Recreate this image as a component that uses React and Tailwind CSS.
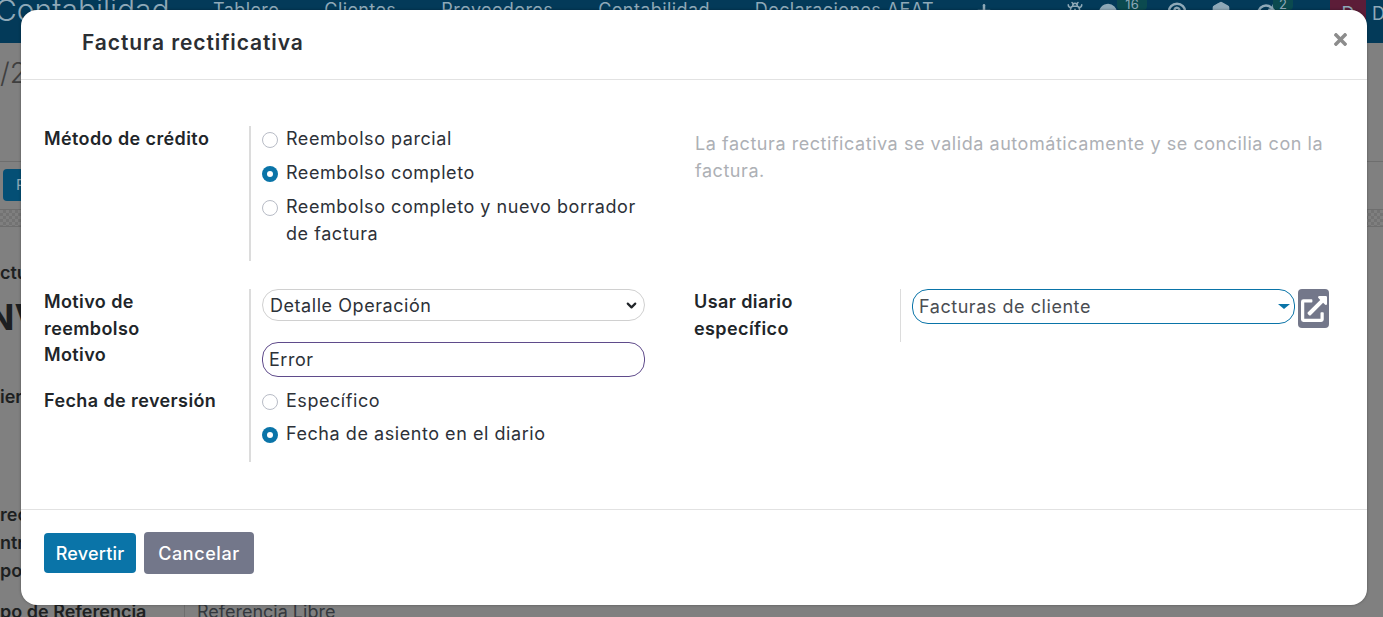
import { ChevronDown, Plus, Bug, MessageCircle, CircleHelp, Package, RefreshCw } from 'lucide-react'
import { FaExternalLinkAlt, FaTimes } from 'react-icons/fa'

const font = "[font-family:Inter,'Liberation_Sans',sans-serif]"

function Radio({ checked, children }) {
  return (
    <div className="flex items-start gap-2">
      {checked ? (
        <span className="mt-[6px] flex h-4 w-4 shrink-0 items-center justify-center rounded-full bg-[#0a74a8]">
          <span className="h-1.5 w-1.5 rounded-full bg-white" />
        </span>
      ) : (
        <span className="mt-[6px] h-4 w-4 shrink-0 rounded-full border border-[#b8bcc6] bg-white" />
      )}
      <span className="-mt-px leading-[27px] text-[#2d3138]">{children}</span>
    </div>
  )
}

function NavBehind() {
  return (
    <div className="flex h-[43px] shrink-0 items-start overflow-hidden bg-[#033a59] text-[#8fa9b8]">
      <span className="-ml-[5px] mt-[-12px] w-[218px] shrink-0 text-[30px] font-light">Contabilidad</span>
      <div className="-mt-[4px] flex shrink-0 gap-[45px] text-[18px] tracking-[0.4px]">
        <span>Tablero</span>
        <span>Clientes</span>
        <span>Proveedores</span>
        <span>Contabilidad</span>
        <span>Declaraciones AEAT</span>
      </div>
      <Plus size={20} strokeWidth={3} className="ml-[40px] mt-[1px] shrink-0" />
      <Bug size={18} className="ml-[72px] mt-[1px] shrink-0" />
      <MessageCircle size={20} fill="currentColor" className="ml-[14px] mt-[3px] shrink-0" />
      <span className="-ml-[1px] h-[10px] w-[30px] shrink-0 rounded-b bg-[#0b4a4f] text-center text-[13px] leading-[8px]">16</span>
      <CircleHelp size={20} strokeWidth={3} className="ml-[20px] mt-[2px] shrink-0" />
      <Package size={20} fill="currentColor" className="ml-[24px] mt-[1px] shrink-0" />
      <RefreshCw size={20} strokeWidth={3} className="ml-[25px] mt-[3px] shrink-0" />
      <span className="-ml-[3px] h-[10px] w-[20px] shrink-0 rounded-b bg-[#0b4a4f] text-center text-[13px] leading-[8px]">2</span>
      <span className="ml-auto h-[43px] w-[36px] shrink-0 bg-[#5c1d38] text-center text-[18px]">D</span>
      <span className="w-[17px] shrink-0 pl-[6px] text-[18px]">D</span>
    </div>
  )
}

function PageBehind() {
  return (
    <div className="flex h-[617px] flex-col overflow-hidden bg-[#808080] text-[#1d1f21]">
      <NavBehind />
      <div className="h-[119px] shrink-0 border-b border-[#6e6e6e] pt-[9px] text-[28px] font-light text-[#3f3f3f]">/2</div>
      <div className="h-[47px] shrink-0 pl-[3px] pt-[7px]">
        <span className="block h-[32px] w-[40px] rounded-[4px] bg-[#044f75] pl-[13px] text-[15px] leading-[32px] text-[#8fa9b8]">P</span>
      </div>
      <div className="h-[18px] shrink-0 border-y border-[#6e6e6e] bg-[#797979] bg-[repeating-conic-gradient(#737373_0_25%,#7f7f7f_0_50%)] bg-[length:6px_6px]" />
      <div className="shrink-0 pt-[33px] text-[18px] font-semibold">
        <div className="h-[26px] leading-[26px]">ctu</div>
        <div className="-ml-[13px] mt-[8px] h-[46px] text-[36px] font-bold leading-[46px]">NV</div>
        <div className="mt-[45px] h-[24px] leading-[24px]">ier</div>
        <div className="mt-[93px] flex flex-col gap-[3px] leading-[25px]">
          <span className="h-[25px]">rec</span>
          <span className="h-[25px]">ntre</span>
          <span className="h-[25px]">po</span>
        </div>
        <div className="mt-[16px] flex h-[26px] leading-[26px]">
          <span className="w-[185px] border-r border-[#6e6e6e]">po de Referencia</span>
          <span className="pl-[12px] font-normal text-[#33373c]">Referencia Libre</span>
        </div>
      </div>
    </div>
  )
}

export default function App() {
  return (
    <div className={`relative h-[617px] w-full overflow-hidden ${font}`}>
      <PageBehind />

      <div className="absolute left-[21px] top-[10px] flex h-[595px] w-[1346px] flex-col rounded-2xl bg-white text-[18px] tracking-[0.55px] shadow-[0_0_3px_rgba(0,0,0,0.35)]">
        <div className="flex h-[70px] shrink-0 items-center justify-between border-b border-[#e2e2e2] pb-[3px] pl-[61px] pr-[17px]">
          <h4 className="text-[21px] font-semibold tracking-[0.9px] text-[#2b2e33]">Factura rectificativa</h4>
          <FaTimes className="-mt-[7px] text-[19px] text-[#8c8c8c]" />
        </div>

        <div className="flex-1 pl-[23px] pt-[46px]">
          <div className="flex h-[135px]">
            <div className="-mt-px w-[205px] font-semibold leading-[27px] tracking-[0.4px] text-[#212529]">Método de crédito</div>
            <div className="flex w-[396px] flex-col gap-[8px] border-l-2 border-[#dcdcdc] pl-[11px]">
              <Radio>Reembolso parcial</Radio>
              <Radio checked>Reembolso completo</Radio>
              <Radio>
                <span className="block w-[360px]">Reembolso completo y nuevo borrador de factura</span>
              </Radio>
            </div>
            <p className="ml-[50px] w-[640px] pt-[4px] leading-[27px] text-[#adb0b5]">
              La factura rectificativa se valida automáticamente y se concilia con la factura.
            </p>
          </div>

          <div className="mt-[28px] flex">
            <div className="grid grid-cols-[205px_396px] grid-rows-[53px_45px_75px] font-semibold leading-[27px] tracking-[0.4px] text-[#212529]">
              <div className="-mt-px w-[120px]">Motivo de reembolso</div>
              <div className="border-l-2 border-[#dcdcdc] pl-[11px] font-normal tracking-[0.55px]">
                <div className="flex h-[32px] items-center justify-between rounded-2xl border border-[#d0d0d0] pl-[7px] pr-[5px] text-[#2d3138]">
                  Detalle Operación
                  <ChevronDown size={15} strokeWidth={3.5} className="text-[#212529]" />
                </div>
              </div>
              <div className="-mt-px">Motivo</div>
              <div className="border-l-2 border-[#dcdcdc] pl-[11px] font-normal tracking-[0.55px]">
                <div className="flex h-[35px] items-center rounded-2xl border border-[#5f4b8b] pb-px pl-[6px] text-[#2d3138]">Error</div>
              </div>
              <div>Fecha de reversión</div>
              <div className="flex flex-col gap-[7px] border-l-2 border-[#dcdcdc] pl-[11px] pt-px font-normal tracking-[0.55px]">
                <Radio>Específico</Radio>
                <Radio checked>Fecha de asiento en el diario</Radio>
              </div>
            </div>

            <div className="ml-[49px] flex items-start">
              <div className="-mt-px w-[206px] font-semibold leading-[27px] tracking-[0.4px] text-[#212529]">
                <span className="block w-[130px]">Usar diario específico</span>
              </div>
              <div className="flex h-[53px] items-start gap-[3px] border-l border-[#dcdcdc] pl-[11px]">
                <div className="flex h-[35px] w-[383px] items-center justify-between rounded-2xl border border-[#0a74a8] pb-px pl-[6px] pr-[4px] text-[#4a4d52]">
                  Facturas de cliente
                  <span className="h-0 w-0 border-x-[6px] border-t-[5px] border-x-transparent border-t-[#0a74a8]" />
                </div>
                <button className="flex h-[39px] w-[31px] items-center justify-center rounded-[4px] bg-[#73778a] text-white">
                  <FaExternalLinkAlt className="text-[26px]" />
                </button>
              </div>
            </div>
          </div>
        </div>

        <div className="flex h-[96px] shrink-0 items-start gap-2 border-t border-[#e2e2e2] pl-[23px] pt-[22px] text-white">
          <button className="mt-px h-[40px] w-[92px] rounded-[4px] bg-[#0a74a8] font-medium tracking-[0.2px]">Revertir</button>
          <button className="h-[42px] w-[110px] rounded-[4px] bg-[#73778a] font-medium">Cancelar</button>
        </div>
      </div>
    </div>
  )
}
